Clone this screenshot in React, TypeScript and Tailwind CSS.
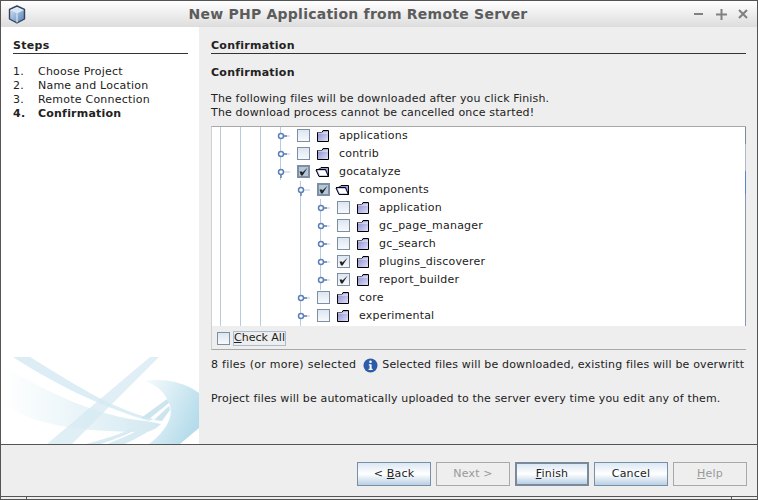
const FONT = "font-['DejaVu_Sans',sans-serif]";

type Row = { name: string; depth: number; state?: "on" | "partial"; open?: boolean };

const rows: Row[] = [
  { name: "applications", depth: 0 },
  { name: "contrib", depth: 0 },
  { name: "gocatalyze", depth: 0, state: "partial", open: true },
  { name: "components", depth: 1, state: "partial", open: true },
  { name: "application", depth: 2 },
  { name: "gc_page_manager", depth: 2 },
  { name: "gc_search", depth: 2 },
  { name: "plugins_discoverer", depth: 2, state: "on" },
  { name: "report_builder", depth: 2, state: "on" },
  { name: "core", depth: 1 },
  { name: "experimental", depth: 1 },
];

function CubeLogo() {
  return (
    <svg width="18" height="19" viewBox="0 0 18 19">
      <defs>
        <linearGradient id="cubeFace" x1="0" y1="0" x2="1" y2="1">
          <stop offset="0" stopColor="#dfeaf6" />
          <stop offset="1" stopColor="#4f7fb8" />
        </linearGradient>
      </defs>
      <path d="M9 1 L16.5 4.5 V14 L9 18 L1.5 14 V4.5 Z" fill="url(#cubeFace)" stroke="#34435c" strokeWidth="1.4" strokeLinejoin="round" />
      <path d="M2 5 L9 8.5 L16 5 L9 2 Z" fill="#d9e6f4" />
      <path d="M9 8.5 V17.5" stroke="#e9f1f9" strokeWidth="1" />
    </svg>
  );
}

function Watermark() {
  return (
    <svg width="198" height="87" viewBox="0 0 198 87" className="block">
      <defs>
        <linearGradient id="wmLeft" x1="0" y1="0" x2="1" y2="0">
          <stop offset="0" stopColor="#ffffff" />
          <stop offset="0.25" stopColor="#f4fafc" />
          <stop offset="1" stopColor="#d2e8f1" />
        </linearGradient>
        <linearGradient id="wmRight" x1="0" y1="0" x2="1" y2="0.6">
          <stop offset="0" stopColor="#f6fbfd" />
          <stop offset="1" stopColor="#b5dcea" />
        </linearGradient>
      </defs>
      <path d="M2 9 C50 38 100 60 145 64 L160 67 C155 72 150 74 146 75 C100 75 30 72 2 45 Z" fill="url(#wmLeft)" />
      <path d="M12 0 H29 C70 25 110 52 153 62 L148 64 C100 50 50 25 12 0 Z" fill="#dcedf5" />
      <path d="M46 87 L149 0 H158 L71 87 Z" fill="#d6e9f2" opacity="0.75" />
      <path d="M144 24 C155 22 180 22 198 36 V71 L179 87 H148 C160 78 175 62 168 46 C163 34 155 28 144 24 Z" fill="url(#wmRight)" />
      <path d="M85 87 C110 80 130 74 140 66 L148 66 C130 76 115 82 100 87 Z" fill="#d8ebf3" />
      <path d="M106 87 C118 82 128 78 136 74 L148 74 C138 80 130 84 124 87 Z" fill="#d8ebf3" />
      <path d="M140 61 L166 42 L168 46 L148 62 Z M153 63 L168 49 L169 53 L161 64 Z" fill="#cde5ef" />
    </svg>
  );
}

function Mark() {
  return (
    <svg width="9" height="9" viewBox="0 0 9 9">
      <path d="M0.5 4.5 L3 4.5 L3.4 5.6 L8.5 0.8 L3.6 8.4 L2 8.4 Z" fill="#222222" />
    </svg>
  );
}

function Check({ state }: { state?: "on" | "partial" }) {
  if (state === "partial") {
    return (
      <span className="flex h-[13px] w-[13px] items-center justify-center border-2 border-[#7e8fa3] bg-[#b4c6d9]">
        <Mark />
      </span>
    );
  }
  return (
    <span className="flex h-[13px] w-[13px] items-center justify-center border border-[#7e8fa3] bg-gradient-to-b from-[#dce6f1] to-[#f7f9fc]">
      {state === "on" ? <Mark /> : null}
    </span>
  );
}

function Folder({ open }: { open?: boolean }) {
  if (open) {
    return (
      <svg width="15" height="12" viewBox="0 0 15 12" className="ml-[-2px]">
        <path d="M4.5 3 L6 1.5 H13.5 V10.5 H4 L1 4 L4.5 3 Z" fill="#9b9cdc" stroke="#000" />
        <path d="M2.5 4.5 H10 L12.5 9.5 H4.8 Z" fill="#ffffff" />
        <path d="M1 3.5 H10.5 L13.5 10.5" fill="none" stroke="#000" />
      </svg>
    );
  }
  return (
    <svg width="12" height="12" viewBox="0 0 12 12">
      <defs>
        <linearGradient id="folderFill" x1="0" y1="0" x2="1" y2="1">
          <stop offset="0" stopColor="#8384d0" />
          <stop offset="1" stopColor="#e4e4f8" />
        </linearGradient>
      </defs>
      <path d="M0.5 2.5 H5 L6 0.5 H11.5 V11.5 H0.5 Z" fill="url(#folderFill)" />
      <path d="M0.5 2.5 H5 L6 0.5 H11.5 V11.5 H0.5 Z" fill="none" stroke="#000" />
      <path d="M1 3 H11" stroke="#ffffff" strokeWidth="0.8" />
    </svg>
  );
}

function Handle({ open }: { open?: boolean }) {
  return (
    <svg width="20" height="18" viewBox="0 0 20 18" className="shrink-0">
      <path d="M4 9 H13" stroke="#b9cbe0" />
      {open ? <path d="M4 9 V15" stroke="#5e80b8" strokeWidth="1.5" /> : <path d="M4 9 H10" stroke="#5e80b8" strokeWidth="1.5" />}
      <circle cx="4" cy="9" r="2.5" fill="#ffffff" stroke="#5e80b8" strokeWidth="1.5" />
    </svg>
  );
}

function TreeRow({ row }: { row: Row }) {
  return (
    <div className="flex h-[18px] items-center" style={{ marginLeft: row.depth * 20 }}>
      <Handle open={row.open} />
      <span className="mb-px mr-[7px]">
        <Check state={row.state} />
      </span>
      <span className="flex w-[15px] justify-start">
        <Folder open={row.open} />
      </span>
      <span className="ml-[7px] text-[11px] tracking-[0.2px] whitespace-nowrap text-[#222222]">{row.name}</span>
    </div>
  );
}

function Guide({ x, top, bottom }: { x: number; top: number; bottom: number }) {
  return <div className="absolute w-px bg-[#b8cade]" style={{ left: x, top, bottom }} />;
}

function NavButton({ label, hot, disabled, strong }: { label: string; hot?: string; disabled?: boolean; strong?: boolean }) {
  const i = hot ? label.indexOf(hot) : -1;
  const base = "flex h-6 w-[74px] items-center justify-center text-[11px] tracking-[0.2px]";
  const look = disabled
    ? "border border-[#a8a8a8] text-[#999999]"
    : `${strong ? "border-2 border-[#7a8a9a]" : "border border-[#7a8fa5]"} bg-gradient-to-b from-[#dbe8f4] via-white to-[#b8cfe4] text-[#222222]`;
  return (
    <div className={`${base} ${look}`}>
      {i >= 0 ? (
        <span>
          {label.slice(0, i)}
          <span className="underline">{label[i]}</span>
          {label.slice(i + 1)}
        </span>
      ) : (
        label
      )}
    </div>
  );
}

export default function App() {
  return (
    <div className={`${FONT} flex h-[500px] w-[758px] flex-col overflow-hidden border border-[#555555] bg-[#eeeeee] text-[11px] tracking-[0.16px] text-[#222222]`}>
      <div className="flex h-[26px] shrink-0 items-center bg-gradient-to-b from-white to-[#dddddd] pl-[7px]">
        <CubeLogo />
        <div className="flex-1 pr-[4px] text-center text-[14px] font-bold tracking-[0.24px] text-[#5c5c5c]">New PHP Application from Remote Server</div>
        <div className="mr-[9px] flex items-center text-[#808080]">
          <svg width="9" height="10" viewBox="0 0 9 10" className="mr-[13px]"><path d="M0 5 H9" stroke="currentColor" strokeWidth="2" /></svg>
          <svg width="11" height="11" viewBox="0 0 11 11" className="mr-[11px]"><path d="M0 5.5 H11 M5.5 0 V11" stroke="currentColor" strokeWidth="2" /></svg>
          <svg width="10" height="10" viewBox="0 0 10 10"><path d="M1 1 L9 9 M9 1 L1 9" stroke="currentColor" strokeWidth="2" /></svg>
        </div>
      </div>

      <div className="flex h-[418px] shrink-0 border-b border-[#555555]">
        <aside className="flex w-[198px] shrink-0 flex-col bg-white">
          <div className="pl-3 pr-[11px] pt-[12px]">
            <div className="border-b border-[#333333] pb-[1px] font-bold leading-[13px] tracking-[0.3px]">Steps</div>
            <ol className="mt-[11px] leading-[14px] tracking-[0.22px]">
              {["Choose Project", "Name and Location", "Remote Connection", "Confirmation"].map((s, i) => (
                <li key={s} className={`flex ${i === 3 ? "font-bold" : ""}`}>
                  <span className="w-[25px]">{i + 1}.</span>
                  {s}
                </li>
              ))}
            </ol>
          </div>
          <div className="mt-auto">
            <Watermark />
          </div>
        </aside>

        <main className="flex min-w-0 flex-1 flex-col pl-3 pr-[11px] pt-[12px]">
          <div className="border-b border-[#333333] pb-[1px] font-bold leading-[13px] tracking-[0.25px]">Confirmation</div>
          <div className="mt-[12px] font-bold leading-[14px] tracking-[0.25px]">Confirmation</div>
          <p className="mt-[12px] leading-[14px]">
            The following files will be downloaded after you click Finish.
            <br />
            The download process cannot be cancelled once started!
          </p>

          <div className="mt-[6px] flex h-[224px] shrink-0 flex-col border-t border-b border-l border-t-[#a8a8a8] border-b-[#a8a8a8] border-l-[#d0d0d0]">
            <div className="relative h-[199px] shrink-0 overflow-hidden bg-white pl-[65px]">
              <Guide x={8} top={0} bottom={0} />
              <Guide x={28} top={0} bottom={0} />
              <Guide x={48} top={0} bottom={0} />
              <Guide x={68} top={0} bottom={146} />
              <Guide x={88} top={54} bottom={0} />
              <Guide x={108} top={72} bottom={36} />
              <div className="relative">
                {rows.map((r) => (
                  <TreeRow key={r.name} row={r} />
                ))}
              </div>
              <div className="absolute inset-y-0 right-0 flex w-px flex-col">
                <div className="h-[17px] bg-[#7a8a9a]" />
                <div className="h-[27px] bg-[#b0bac6]" />
                <div className="h-[23px] bg-[#5f80d0]" />
                <div className="flex-1 bg-[#8598ae]" />
              </div>
            </div>
            <div className="flex flex-1 items-center pl-[5px] pt-px">
              <Check />
              <span className="ml-[3px] flex h-[15px] items-center border border-[#a8bcd2] text-[11px] tracking-normal">
                <span className="underline">C</span>heck All
              </span>
            </div>
          </div>

          <div className="mt-[7px] flex h-[16px] items-center whitespace-nowrap">
            <span className="tracking-[0.27px]">8 files (or more) selected</span>
            <svg width="15" height="15" viewBox="0 0 15 15" className="ml-[7px] mr-[4px] shrink-0">
              <circle cx="7.5" cy="7.5" r="7" fill="#2c5ba8" />
              <circle cx="7.5" cy="3.8" r="1.3" fill="#ffffff" />
              <path d="M5.8 6.2 H8.6 V10.8 H9.6 V12 H5.6 V10.8 H6.6 V7.4 H5.8 Z" fill="#ffffff" />
            </svg>
            <span>Selected files will be downloaded, existing files will be overwritt</span>
          </div>
          <p className="mt-[19px] leading-[14px]">Project files will be automatically uploaded to the server every time you edit any of them.</p>
        </main>
      </div>

      <div className="flex flex-1 justify-end gap-[5px] pr-[10px] pt-[17px]">
        <NavButton label="< Back" hot="B" />
        <NavButton label="Next >" disabled />
        <NavButton label="Finish" hot="F" strong />
        <NavButton label="Cancel" />
        <NavButton label="Help" hot="H" disabled />
      </div>
      <div className="flex h-[3px] shrink-0 border-t border-[#555555]">
        <div className="w-[26px] border-r border-[#555555]" />
        <div className="flex-1 border-r border-[#555555]" />
        <div className="w-[25px]" />
      </div>
    </div>
  );
}
